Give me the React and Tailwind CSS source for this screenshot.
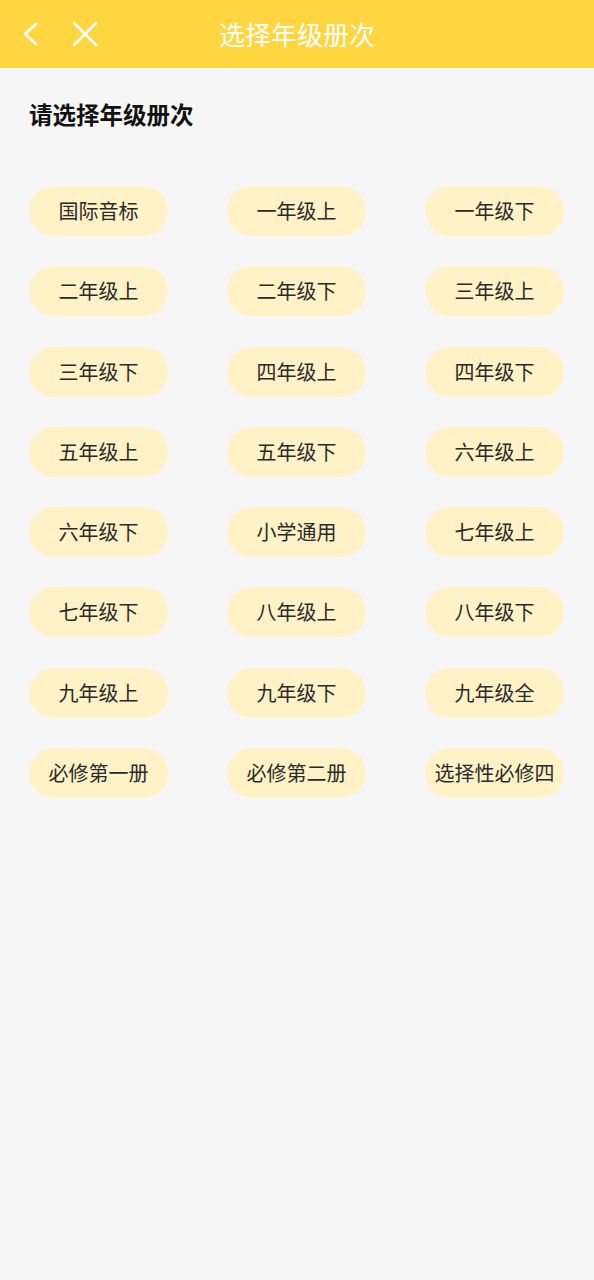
import React from "react";

const grades = [
  "国际音标", "一年级上", "一年级下",
  "二年级上", "二年级下", "三年级上",
  "三年级下", "四年级上", "四年级下",
  "五年级上", "五年级下", "六年级上",
  "六年级下", "小学通用", "七年级上",
  "七年级下", "八年级上", "八年级下",
  "九年级上", "九年级下", "九年级全",
  "必修第一册", "必修第二册", "选择性必修四",
];

const font = { fontFamily: '"Noto Sans CJK SC", "Noto Sans", sans-serif' };

export default function App() {
  return (
    <div className="min-h-screen bg-[#f6f6f6]" style={font}>
      {/* Header */}
      <div className="relative h-[68px] bg-[#ffd63f] flex items-center">
        <div className="flex items-center pl-[20px] gap-[30px] z-10">
          <svg width="22" height="26" viewBox="0 0 22 26" fill="none">
            <path d="M16 3 L5 13 L16 23" stroke="white" strokeWidth="2.6" strokeLinecap="round" strokeLinejoin="round" />
          </svg>
          <svg width="26" height="26" viewBox="0 0 26 26" fill="none">
            <path d="M2 2 L24 24 M24 2 L2 24" stroke="white" strokeWidth="2.6" strokeLinecap="round" />
          </svg>
        </div>
        <div className="absolute inset-0 flex items-center justify-center text-white text-[26px] leading-none">
          选择年级册次
        </div>
      </div>

      {/* Content */}
      <div className="pl-[29px] pr-[30px] pt-[32px]">
        <h1 className="text-[23.5px] leading-[28px] font-bold text-[#111]">请选择年级册次</h1>
        <div className="mt-[58px] grid grid-cols-[139px_139px_139px] justify-between gap-y-[30.3px]">
          {grades.map((g) => (
            <div
              key={g}
              className="h-[50px] rounded-full bg-[#fff2c6] flex items-center justify-center text-[20px] text-[#2a2a2a] whitespace-nowrap"
            >
              {g}
            </div>
          ))}
        </div>
      </div>
    </div>
  );
}
